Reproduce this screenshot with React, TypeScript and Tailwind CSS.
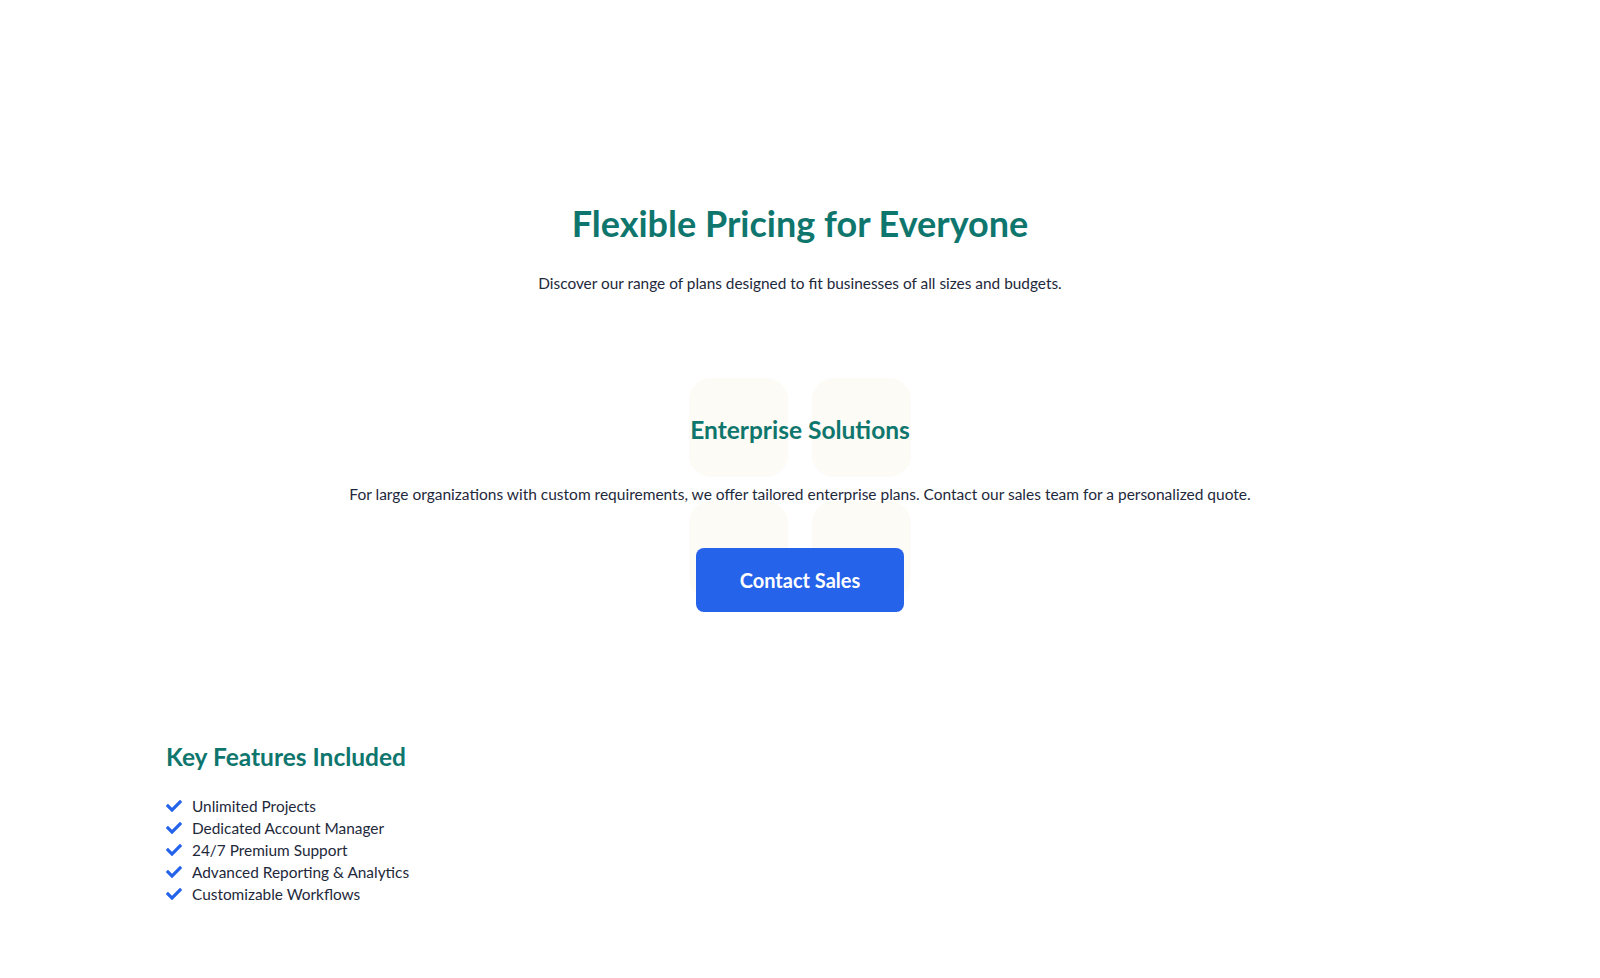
import React from "react";
import { FaCheck } from "react-icons/fa";

const FEATURES = [
  "Unlimited Projects",
  "Dedicated Account Manager",
  "24/7 Premium Support",
  "Advanced Reporting & Analytics",
  "Customizable Workflows",
];

// Pricing intro, enterprise call-out and the feature list.
export default function App() {
  return (
    <div
      className="min-h-[978px] bg-white text-[#1e293b]"
      style={{ fontFamily: "Lato, 'Open Sans', sans-serif" }}
    >
      <section className="flex flex-col items-center pt-[203px] text-center">
        <h1 className="text-[36px] font-bold leading-[40px] text-[#0f766e]">
          Flexible Pricing for Everyone
        </h1>
        <p className="mt-[28px] text-[15.4px] leading-[24px]">
          Discover our range of plans designed to fit businesses of all sizes and budgets.
        </p>
      </section>

      <section className="relative mt-[119px] flex flex-col items-center text-center">
        {/* faint decorative tiles behind the heading */}
        <div className="pointer-events-none absolute left-1/2 top-[-36px] grid -translate-x-1/2 grid-cols-2 gap-[24px]">
          <div className="h-[99px] w-[99px] rounded-[22px] bg-[#fcfbf5]" />
          <div className="h-[99px] w-[99px] rounded-[22px] bg-[#fcfbf5]" />
          <div className="h-[99px] w-[99px] rounded-[22px] bg-[#fcfbf5]" />
          <div className="h-[99px] w-[99px] rounded-[22px] bg-[#fcfbf5]" />
        </div>
        <h2 className="relative text-[24.5px] font-bold leading-[32px] text-[#0f766e]">
          Enterprise Solutions
        </h2>
        <p className="relative mt-[36px] text-[15.5px] leading-[24px]">
          For large organizations with custom requirements, we offer tailored enterprise plans. Contact our sales team for a personalized quote.
        </p>
        <button className="relative mt-[42px] h-[64px] w-[208px] rounded-[8px] bg-[#2563eb] text-[20px] font-bold text-white">
          Contact Sales
        </button>
      </section>

      <section className="mx-auto mt-[129px] w-[1268px] pb-[60px]">
        <h3 className="text-[24.5px] font-bold leading-[32px] text-[#0f766e]">
          Key Features Included
        </h3>
        <ul className="mt-[22px]">
          {FEATURES.map((f) => (
            <li key={f} className="flex items-center gap-[10px] text-[15.4px] leading-[22px]">
              <FaCheck className="h-[16px] w-[16px] text-[#2563eb]" />
              <span>{f}</span>
            </li>
          ))}
        </ul>
      </section>
    </div>
  );
}
